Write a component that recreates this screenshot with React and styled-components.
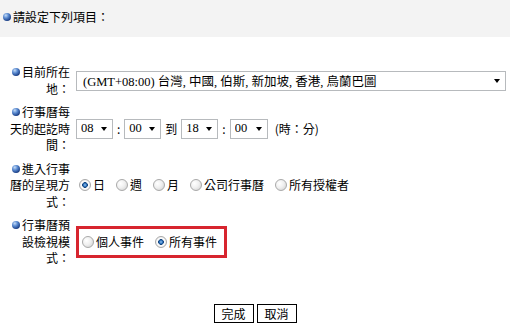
import React from 'react';
import styled, { createGlobalStyle } from 'styled-components';

const GlobalStyle = createGlobalStyle`
  body {
    margin: 0;
    background: #fff;
    color: #000;
    font-family: "Noto Sans CJK TC", "Noto Sans", sans-serif;
    font-size: 12px;
  }
`;

const Page = styled.div`
  width: 510px;
`;

const Header = styled.div`
  height: 37px;
  box-sizing: border-box;
  padding: 9px 0 0 3px;
  background: #f3f3f3;
  line-height: 16px;
`;

const Bullet = styled.span`
  display: inline-block;
  width: 8px;
  height: 8px;
  margin-right: 2px;
  border-radius: 50%;
  vertical-align: 1px;
  background: radial-gradient(circle at 35% 30%, #c4dcf7 0%, #5a8ad0 35%, #1d4289 72%, #0d2356 100%);
`;

const Form = styled.div`
  display: grid;
  grid-template-columns: 70px 1fr;
  column-gap: 6px;
  row-gap: 7px;
  margin-top: 27px;
  padding-right: 4px;
`;

const Label = styled.div`
  padding-left: 6px;
  text-align: right;
  line-height: 16.5px;
`;

const Field = styled.div`
  display: flex;
  align-items: center;
  gap: ${(p) => p.$gap || 0}px;
`;

const Dropdown = styled.div`
  display: flex;
  align-items: center;
  box-sizing: border-box;
  width: ${(p) => (p.$width ? `${p.$width}px` : '100%')};
  height: 20px;
  padding: 0 5px 0 ${(p) => p.$padLeft || 4}px;
  border: 1px solid #b7babd;
  background: #fff;
  font-family: "Liberation Serif", "Noto Sans CJK TC", serif;
  font-size: 12.5px;
  white-space: nowrap;
`;

const Value = styled.span`
  flex: 1;
  overflow: hidden;
`;

const Caret = styled.span`
  width: 0;
  height: 0;
  border-left: 3.5px solid transparent;
  border-right: 3.5px solid transparent;
  border-top: 4px solid #000;
`;

const Sep = styled.span`
  line-height: 16px;
`;

const Unit = styled.span`
  margin-left: 3px;
  line-height: 16px;
`;

const Option = styled.label`
  display: inline-flex;
  align-items: center;
  line-height: 16.5px;
`;

const Radio = styled.input.attrs({ type: 'radio' })`
  appearance: none;
  width: 12px;
  height: 12px;
  margin: 0 2px 0 3px;
  border: 1px solid #a9a9a9;
  border-radius: 50%;
  box-sizing: border-box;
  background: radial-gradient(circle at 35% 35%, #ffffff 0%, #f0f0f0 45%, #cdcdcd 100%);

  &:checked {
    background: radial-gradient(circle at 50% 50%, #9fcaf0 0%, #2f73bd 22%, #17477f 36%, #ffffff 44%, #efefef 70%, #cfcfcf 100%);
  }
`;

const Options = styled.div`
  display: flex;
  align-items: center;
  gap: 8px;
`;

const Highlight = styled(Options)`
  padding: 5px 7px 5px 0;
  border: 3px solid #d7252f;
`;

const Actions = styled.div`
  display: flex;
  justify-content: center;
  gap: 3px;
  margin-top: 37px;
`;

const Button = styled.button`
  width: 40px;
  height: 19px;
  padding: 0;
  border: 1px solid #000;
  background: #fff;
  font-family: "Noto Sans CJK TC", sans-serif;
  font-size: 12px;
  line-height: 17px;
  color: #000;
`;

function Select({ value, width, padLeft }) {
  return (
    <Dropdown $width={width} $padLeft={padLeft}>
      <Value>{value}</Value>
      <Caret />
    </Dropdown>
  );
}

function Choice({ name, label, checked }) {
  return (
    <Option>
      <Radio name={name} defaultChecked={checked} />
      {label}
    </Option>
  );
}

export default function App() {
  return (
    <Page>
      <GlobalStyle />
      <Header>
        <Bullet />請設定下列項目：
      </Header>

      <Form>
        <Label><Bullet />目前所在地：</Label>
        <Field>
          <Select value="(GMT+08:00) 台灣, 中國, 伯斯, 新加坡, 香港, 烏蘭巴圖" padLeft={6} />
        </Field>

        <Label><Bullet />行事曆每天的起訖時間：</Label>
        <Field $gap={4}>
          <Select value="08" width={37} />
          <Sep>:</Sep>
          <Select value="00" width={37} />
          <Sep>到</Sep>
          <Select value="18" width={37} />
          <Sep>:</Sep>
          <Select value="00" width={38} />
          <Unit>(時：分)</Unit>
        </Field>

        <Label><Bullet />進入行事曆的呈現方式：</Label>
        <Field>
          <Options>
            <Choice name="view" label="日" checked />
            <Choice name="view" label="週" />
            <Choice name="view" label="月" />
            <Choice name="view" label="公司行事曆" />
            <Choice name="view" label="所有授權者" />
          </Options>
        </Field>

        <Label><Bullet />行事曆預設檢視模式：</Label>
        <Field>
          <Highlight>
            <Choice name="mode" label="個人事件" />
            <Choice name="mode" label="所有事件" checked />
          </Highlight>
        </Field>
      </Form>

      <Actions>
        <Button>完成</Button>
        <Button>取消</Button>
      </Actions>
    </Page>
  );
}
